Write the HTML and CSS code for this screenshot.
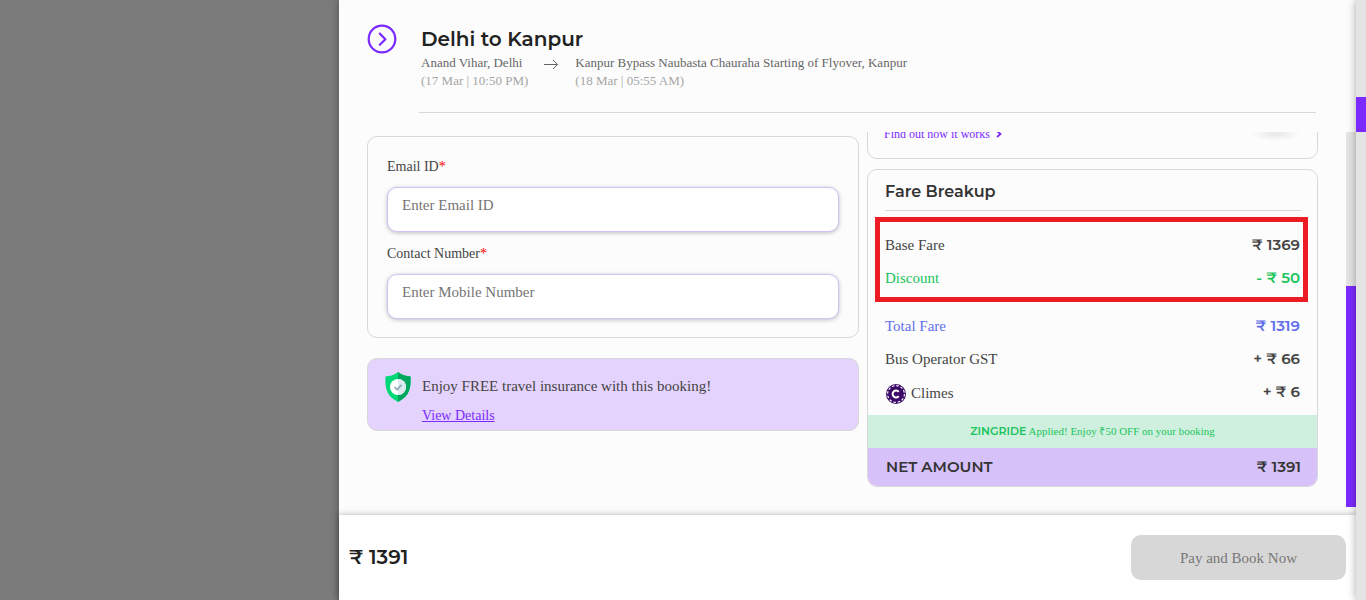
FILE: index.html
```html
<!DOCTYPE html>
<html lang="en">
<head>
<meta charset="utf-8">
<title>Delhi to Kanpur</title>
<link rel="stylesheet" href="styles.css">
</head>
<body>
<div class="page">
  <div class="backdrop"></div>
  <main class="drawer">
    <header class="trip">
      <button class="collapse" type="button" aria-label="Close panel">
        <svg width="30" height="30" viewBox="0 0 30 30" fill="none" stroke="#7b2bff" stroke-width="2.200">
          <circle cx="15" cy="15" r="13.3"/>
          <path d="M12.8 9.600l5.600 5.600-5.600 5.600" stroke-linecap="round" stroke-linejoin="round"/>
        </svg>
      </button>
      <div class="trip-info">
        <h1>Delhi to Kanpur</h1>
        <div class="route">
          <div class="stop"><p>Anand Vihar, Delhi</p><p class="time">(17 Mar | 10:50 PM)</p></div>
          <svg class="arrow" width="16" height="12" viewBox="0 0 16 12" fill="none" stroke="#666"><path d="M1 6.500h13.500M10 2l4.500 4.500L10 11"/></svg>
          <div class="stop"><p>Kanpur Bypass Naubasta Chauraha Starting of Flyover, Kanpur</p><p class="time">(18 Mar | 05:55 AM)</p></div>
        </div>
      </div>
    </header>

    <div class="body">
      <div class="columns">
        <section class="left">
          <form class="card contact">
            <label for="email">Email ID<span class="req">*</span></label>
            <input id="email" type="email" placeholder="Enter Email ID">
            <label for="mobile">Contact Number<span class="req">*</span></label>
            <input id="mobile" type="tel" placeholder="Enter Mobile Number">
          </form>
          <div class="card insurance">
            <svg width="28" height="32" viewBox="0 0 28 32">
              <path d="M14 1c3 2.700 8 4.200 12.500 4.600.5 11-.5 19.400-12.500 25.400C2 25 1 16.600 1.500 5.600 6 5.200 11 3.700 14 1z" fill="#00d778"/>
              <path d="M14 1c3 2.700 8 4.200 12.500 4.600.5 11-.5 19.400-12.500 25.400z" fill="#00a85f"/>
              <circle cx="14" cy="16" r="8" fill="#fff"/>
              <path d="M14 8a8 8 0 0 1 0 16z" fill="#dce9f1"/>
              <path d="M10.500 16.200l2.600 2.500 4.400-4.900" fill="none" stroke="#8fb0b8" stroke-width="1.800"/>
            </svg>
            <div>
              <p>Enjoy FREE travel insurance with this booking!</p>
              <a href="#">View Details</a>
            </div>
          </div>
        </section>

        <section class="right">
          <div class="card promo">
            <a href="#">Find out how it works
              <svg width="6" height="8" viewBox="0 0 6 8" fill="none" stroke="#7b2bff" stroke-width="1.800"><path d="M1 1l3.500 3L1 7"/></svg>
            </a>
            <span class="promo-shade"></span>
          </div>
          <div class="card fare">
            <h2>Fare Breakup</h2>
            <div class="highlight">
              <div class="row"><span>Base Fare</span><b>₹ 1369</b></div>
              <div class="row discount"><span>Discount</span><b>- ₹ 50</b></div>
            </div>
            <div class="rows">
              <div class="row total"><span>Total Fare</span><b>₹ 1319</b></div>
              <div class="row"><span>Bus Operator GST</span><b>+ ₹ 66</b></div>
              <div class="row"><span class="climes">
                <svg width="22" height="22" viewBox="0 0 22 22" fill="none">
                  <circle cx="11" cy="11" r="10" fill="#3b0a68"/>
                  <circle cx="11" cy="11" r="8.400" stroke="#fff" stroke-width="1.100" stroke-dasharray="2.600 1.798"/>
                  <path d="M13.700 8.900a3.400 3.400 0 1 0 0 4.200" stroke="#fff" stroke-width="2"/>
                </svg>Climes</span><b>+ ₹ 6</b></div>
            </div>
            <p class="coupon"><b>ZINGRIDE</b> Applied! Enjoy ₹50 OFF on your booking</p>
            <div class="net"><span>NET AMOUNT</span><span>₹ 1391</span></div>
          </div>
        </section>
      </div>
      <div class="inner-track"><div class="inner-thumb"></div></div>
    </div>

    <footer class="pay">
      <strong>₹ 1391</strong>
      <button type="button" disabled>Pay and Book Now</button>
    </footer>
  </main>
  <div class="outer-track"><div class="outer-thumb"></div></div>
</div>
</body>
</html>
```
FILE: styles.css
```css
* { box-sizing: border-box; }
body, h1, h2, p { margin: 0; }
body {
  font-family: "Liberation Serif", "Times New Roman", serif;
  font-size: 15px;
  color: #444;
  overflow: hidden;
}
h1, h2, b, strong, .net { font-family: Montserrat, Inter, sans-serif; }
.page { display: flex; height: 100vh; background: #7b7b7b; }
.backdrop { flex: 1; }
.drawer {
  flex: 3;
  min-width: 0;
  display: flex;
  flex-direction: column;
  background: #fcfcfc;
  box-shadow: 0 0 8px rgba(0, 0, 0, .35);
}

.trip { display: flex; gap: 22px; padding: 24px 40px 0 28px; }
.collapse { width: 30px; height: 30px; padding: 0; border: 0; background: none; }
.collapse svg { display: block; }
.trip-info { flex: 1; padding: 0 2px 22px; border-bottom: 1px solid #d8d8d8; }
h1 { font-size: 20px; line-height: 30px; font-weight: 600; color: #222; }
.route { display: flex; font-size: 13px; line-height: 18px; color: #666; }
.time { color: #a6a6a6; }
.arrow { margin: 4px 16px 0 15px; }

.body { flex: 1; min-height: 0; display: flex; margin: 19px 0 8px; }
.columns {
  flex: 1;
  display: grid;
  grid-template-columns: 492fr 451fr;
  gap: 8px;
  padding: 0 28px;
  overflow: hidden;
}
.card { border: 1px solid #d8d8d8; border-radius: 10px; }
.left { padding-top: 4px; }
.contact { padding: 20px 19px 18px; }
label { display: block; font-size: 14px; line-height: 20px; }
.req { color: #f00; }
input {
  display: block;
  width: 100%;
  height: 45px;
  margin: 10px 0 12px;
  padding: 0 14px 8px;
  border: 1px solid #d4c0f8;
  border-radius: 10px;
  background: #fff;
  box-shadow: 0 1px 4px rgba(0, 0, 0, .25);
  font: 15px "Liberation Serif", "Times New Roman", serif;
}
input:last-child { margin-bottom: 0; }
input::placeholder { color: #757575; }
.insurance { display: flex; gap: 10px; margin-top: 20px; padding: 12px 16px 0; background: #e4d3fc; }
.insurance p { line-height: 30px; }
.insurance a { display: block; font-size: 14px; line-height: 29px; color: #7b2bff; }

.right { min-width: 0; }
.promo {
  display: flex;
  justify-content: space-between;
  margin-top: -16px;
  padding: 10px 16px 16px;
}
.promo a { font-size: 12px; line-height: 15px; color: #7b2bff; text-decoration: none; }
.promo svg { margin-left: 3px; }
.promo-shade { width: 50px; height: 14px; background: radial-gradient(closest-side, #e8e8e8, #fcfcfc); }
.fare { margin-top: 10px; overflow: hidden; }
h2 {
  margin: 0 16px 0 17px;
  padding: 9px 0 5px;
  border-bottom: 1px solid #d8d8d8;
  font-size: 16px;
  line-height: 26px;
  font-weight: 600;
  color: #333;
}
.highlight { margin: 6px 9px 0 7px; padding: 7px 3px 2px 5px; border: 5px solid #ed1c24; }
.row { display: flex; align-items: center; justify-content: space-between; height: 33px; }
.row b { padding-bottom: 2px; font-weight: 600; }
.rows { padding: 8px 17px 6px; }
.discount { color: #1bc45d; }
.total { color: #5f6fee; }
.climes { display: flex; align-items: center; gap: 4px; padding-top: 2px; }
.coupon {
  background: #d0f0df;
  color: #1bc45d;
  text-align: center;
  font-size: 11px;
  line-height: 33px;
}
.coupon b { font-weight: 600; }
.net {
  display: flex;
  justify-content: space-between;
  padding: 0 16px 0 18px;
  background: #d6c1f8;
  color: #333;
  font-weight: 600;
  line-height: 38px;
}

.inner-track { width: 10px; display: flex; flex-direction: column; justify-content: flex-end; background: #e4e4e4; }
.inner-thumb { height: 59%; background: #7b2bff; }
.outer-track { position: relative; z-index: 1; width: 10px; padding-top: 97px; background: #e4e4e4; box-shadow: 0 0 8px rgba(0, 0, 0, .35); }
.outer-thumb { height: 35px; background: #7b2bff; }

.pay {
  display: flex;
  align-items: center;
  justify-content: space-between;
  height: 85px;
  padding: 0 10px;
  background: #fff;
  box-shadow: 0 0 6px rgba(0, 0, 0, .3);
}
.pay strong { padding-bottom: 2px; font-size: 20px; font-weight: 600; color: #222; }
.pay button {
  width: 215px;
  height: 45px;
  padding: 2px 0 0;
  border: 0;
  border-radius: 10px;
  background: #d7d7d7;
  color: #777;
  font: 15px "Liberation Serif", "Times New Roman", serif;
}
```
